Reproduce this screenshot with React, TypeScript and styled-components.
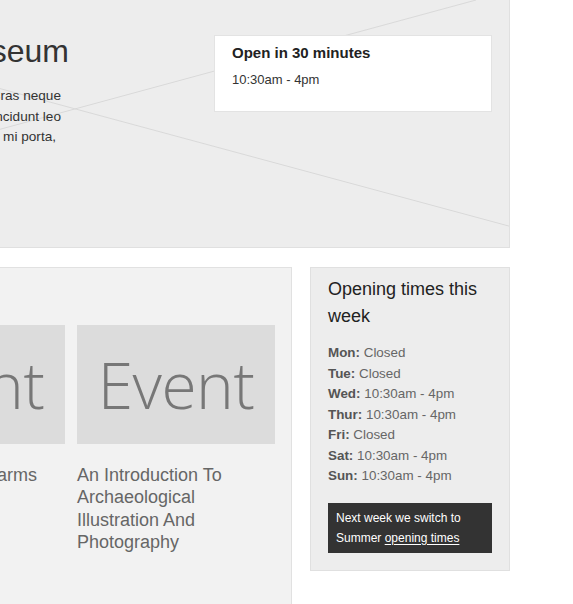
import React from 'react'
import styled, { createGlobalStyle } from 'styled-components'

const GlobalStyle = createGlobalStyle`
   html, body {
      margin: 0;
      padding: 0;
      overflow: hidden;
      background: #fff;
   }

   body {
      font-family: 'Liberation Sans', Arial, sans-serif;
      color: #333;
   }
`

const Page = styled.div`
   width: 661px;
   margin-left: -151px;
`

const Hero = styled.section`
   position: relative;
   display: flex;
   align-items: flex-start;
   height: 248px;
   box-sizing: border-box;
   padding-left: 20px;
   background: #ededed;
   border-right: 1px solid #e0e0e0;
   border-bottom: 1px solid #e0e0e0;
`

const Placeholder = styled.svg`
   position: absolute;
   inset: 0;
   width: 100%;
   height: 100%;
   pointer-events: none;

   line {
      stroke: #d9d9d9;
      stroke-width: 1;
   }
`

const HeroText = styled.div`
   position: relative;
   display: flex;
   flex-direction: column;
   align-items: flex-end;
   width: 200px;
   padding-top: 32px;
   white-space: nowrap;
`

const HeroTitle = styled.h1`
   margin: 0 0 16px;
   font-size: 32px;
   line-height: 38px;
   font-weight: normal;
   color: #333;
`

const HeroLine = styled.div<{ $inset?: number }>`
   font-size: 13.6px;
   line-height: 20.5px;
   color: #333;
   padding-right: ${(p) => 8 + (p.$inset || 0)}px;
`

const OpenCard = styled.div`
   position: relative;
   width: 278px;
   box-sizing: border-box;
   margin: 35px 17px 0 auto;
   padding: 7px 17px 21px;
   background: #fff;
   border: 1px solid #e3e3e3;
`

const OpenTitle = styled.div`
   font-size: 15px;
   line-height: 20px;
   font-weight: bold;
   color: #222;
   margin-bottom: 7px;
`

const OpenHours = styled.div`
   font-size: 13px;
   line-height: 20px;
   color: #333;
`

const Lower = styled.div`
   display: flex;
   align-items: flex-start;
   gap: 18px;
   margin-top: 19px;
`

const EventsPanel = styled.section`
   display: flex;
   align-items: flex-start;
   gap: 12px;
   width: 443px;
   height: 400px;
   box-sizing: border-box;
   padding: 57px 17px 0;
   background: #f2f2f2;
   border: 1px solid #e1e1e1;
`

const EventCard = styled.a`
   display: flex;
   flex-direction: column;
   gap: 20px;
   width: 198px;
   flex-shrink: 0;
   text-decoration: none;
`

const EventImage = styled.div`
   display: flex;
   align-items: center;
   justify-content: center;
   height: 119px;
   background: #dcdcdc;
   color: #777;
   font-family: 'Open Sans', Lato, sans-serif;
   font-weight: 300;
   font-size: 64px;
   letter-spacing: -0.5px;
`

const EventTitle = styled.div`
   font-size: 18px;
   line-height: 22.3px;
   color: #666;
`

const Sidebar = styled.aside`
   width: 200px;
   box-sizing: border-box;
   padding: 8px 17px 17px;
   background: #ededed;
   border: 1px solid #e0e0e0;
`

const SidebarTitle = styled.h2`
   margin: 0 0 13px;
   font-size: 18px;
   line-height: 27px;
   font-weight: normal;
   color: #222;
`

const Hours = styled.ul`
   list-style: none;
   margin: 0 0 16px;
   padding: 0;
   font-size: 13.4px;
   line-height: 20.5px;
   color: #666;
`

const Day = styled.li`
   b {
      color: #555;
   }
`

const Notice = styled.div`
   padding: 5px 8px;
   background: #333;
   color: #fff;
   font-size: 12px;
   line-height: 20px;

   a {
      color: #fff;
      text-decoration: underline;
      text-underline-offset: 2px;
   }
`

const week = [
   ['Mon', 'Closed'],
   ['Tue', 'Closed'],
   ['Wed', '10:30am - 4pm'],
   ['Thur', '10:30am - 4pm'],
   ['Fri', 'Closed'],
   ['Sat', '10:30am - 4pm'],
   ['Sun', '10:30am - 4pm'],
]

const events = ['Ornamental Firearms', 'An Introduction To Archaeological Illustration And Photography']

export default function App() {
   return (
      <>
         <GlobalStyle />
         <Page>
            <Hero>
               <Placeholder viewBox="0 0 661 248" preserveAspectRatio="none">
                  <line x1="628" y1="0" x2="0" y2="171" />
                  <line x1="0" y1="48" x2="661" y2="227" />
               </Placeholder>
               <HeroText>
                  <HeroTitle>The Museum</HeroTitle>
                  <HeroLine>Lorem ipsum dolor sit amet. Cras neque</HeroLine>
                  <HeroLine>metus, facilisis tincidunt leo</HeroLine>
                  <HeroLine $inset={5}>vel, viverra ut mi porta,</HeroLine>
               </HeroText>
               <OpenCard>
                  <OpenTitle>Open in 30 minutes</OpenTitle>
                  <OpenHours>10:30am - 4pm</OpenHours>
               </OpenCard>
            </Hero>
            <Lower>
               <EventsPanel>
                  {events.map((title) => (
                     <EventCard key={title} href="#">
                        <EventImage>Event</EventImage>
                        <EventTitle>{title}</EventTitle>
                     </EventCard>
                  ))}
               </EventsPanel>
               <Sidebar>
                  <SidebarTitle>Opening times this week</SidebarTitle>
                  <Hours>
                     {week.map(([day, time]) => (
                        <Day key={day}>
                           <b>{day}:</b> {time}
                        </Day>
                     ))}
                  </Hours>
                  <Notice>
                     Next week we switch to Summer <a href="#">opening times</a>
                  </Notice>
               </Sidebar>
            </Lower>
         </Page>
      </>
   )
}
